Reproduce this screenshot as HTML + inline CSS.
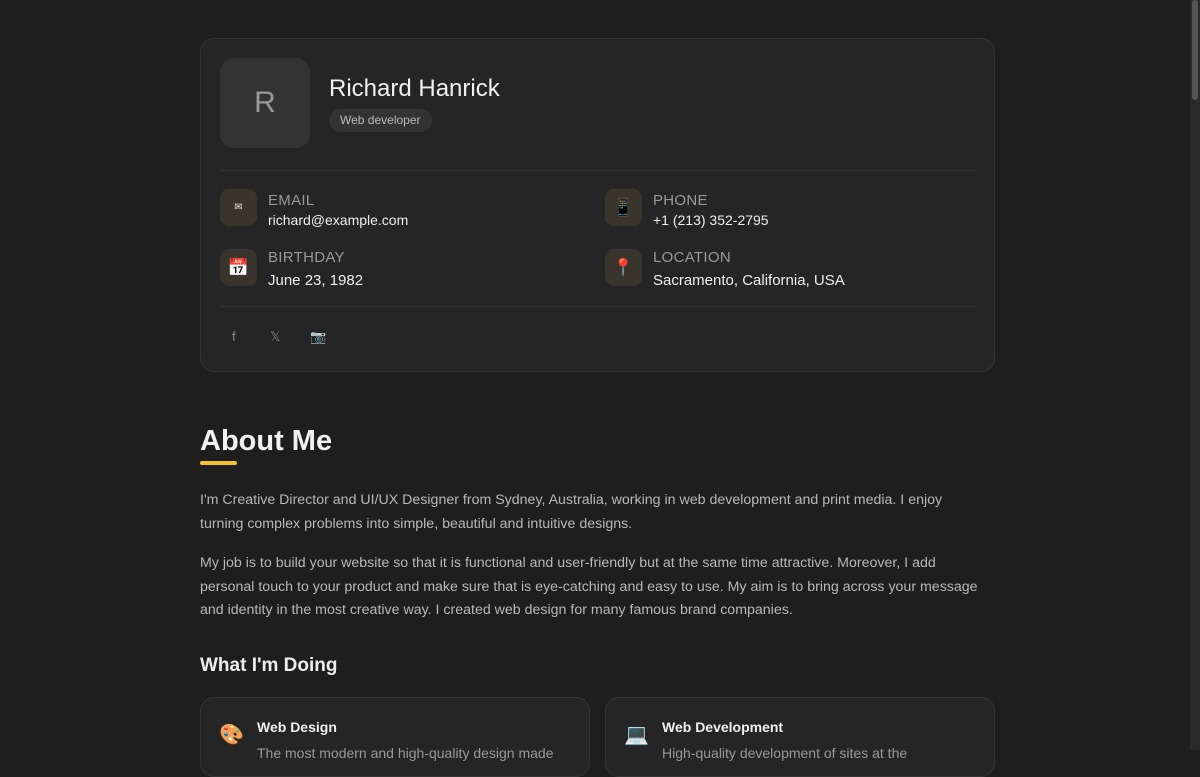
<!DOCTYPE html>
<html><head><meta charset="utf-8"><style>
*{box-sizing:border-box;margin:0;padding:0}
html,body{width:1200px;height:750px;overflow:hidden;background:#1e1e1e;font-family:"Liberation Sans",sans-serif;color:#e8e8e8}
.sb{position:absolute;right:0;top:0;width:10px;height:750px;background:#2a2a2a}
.sb i{position:absolute;left:2px;top:0;width:6px;height:100px;background:#555;border-radius:3px}
.card{position:absolute;left:200px;top:38px;width:795px;height:334px;background:#252525;border:1px solid #353535;border-radius:14px}
.av{position:absolute;left:19px;top:19px;width:90px;height:90px;background:#333;border-radius:14px;color:#999;font-size:30px;text-align:center;line-height:90px}
.name{position:absolute;left:128px;top:36px;font-size:24px;color:#f0f0f0}
.tag{position:absolute;left:128px;top:70px;height:23px;padding:0 11px;background:#333;border-radius:12px;font-size:12px;color:#bbb;line-height:23px}
.hr{position:absolute;left:19px;right:19px;height:1px;background:#333}
.ic{position:absolute;width:37px;height:37px;border-radius:9px;background:#3a352c;text-align:center;line-height:37px;font-size:17px}
.lb{position:absolute;font-size:15px;color:#999;letter-spacing:.3px}
.vl{position:absolute;font-size:14px;color:#eee}
.soc{position:absolute;top:290px;font-size:13px;color:#888}
h2{position:absolute;left:200px;top:425px;font-size:29px;font-weight:600;color:#f2f2f2}
.ul{position:absolute;left:200px;top:461px;width:37px;height:4px;background:#f2c230;border-radius:2px}
p{position:absolute;left:200px;width:820px;font-size:14.2px;line-height:23.5px;color:#b8b8b8;white-space:nowrap}
h3{position:absolute;left:200px;top:655px;font-size:19px;font-weight:600;color:#eee}
.sv{position:absolute;top:697px;width:390px;height:80px;background:#252525;border:1px solid #353535;border-radius:14px}
.sv b{position:absolute;left:56px;top:21px;font-size:14px;color:#f0f0f0}
.sv span{position:absolute;left:18px;top:24px;font-size:20px}
.sv em{position:absolute;left:56px;top:47px;font-style:normal;font-size:14px;color:#999}
</style></head><body>
<div class="card">
<div class="av">R</div>
<div class="name">Richard Hanrick</div>
<div class="tag">Web developer</div>
<div class="hr" style="top:131px"></div>
<div class="ic" style="left:19px;top:150px;font-size:10px">✉</div>
<div class="lb" style="left:67px;top:153px">EMAIL</div>
<div class="vl" style="left:67px;top:173px">richard@example.com</div>
<div class="ic" style="left:404px;top:150px">📱</div>
<div class="lb" style="left:452px;top:153px">PHONE</div>
<div class="vl" style="left:452px;top:173px">+1 (213) 352-2795</div>
<div class="ic" style="left:19px;top:210px">📅</div>
<div class="lb" style="left:67px;top:210px">BIRTHDAY</div>
<div class="vl" style="left:67px;top:233px;font-size:15px">June 23, 1982</div>
<div class="ic" style="left:404px;top:210px">📍</div>
<div class="lb" style="left:452px;top:210px">LOCATION</div>
<div class="vl" style="left:452px;top:233px;font-size:15px">Sacramento, California, USA</div>
<div class="hr" style="top:267px"></div>
<div class="soc" style="left:31px">f</div>
<div class="soc" style="left:69px">𝕏</div>
<div class="soc" style="left:109px">📷</div>
</div>
<h2>About Me</h2><div class="ul"></div>
<p style="top:489px">I'm Creative Director and UI/UX Designer from Sydney, Australia, working in web development and print media. I enjoy<br>turning complex problems into simple, beautiful and intuitive designs.</p>
<p style="top:552px">My job is to build your website so that it is functional and user-friendly but at the same time attractive. Moreover, I add<br>personal touch to your product and make sure that is eye-catching and easy to use. My aim is to bring across your message<br>and identity in the most creative way. I created web design for many famous brand companies.</p>
<h3>What I'm Doing</h3>
<div class="sv" style="left:200px"><span>🎨</span><b>Web Design</b><em>The most modern and high-quality design made</em></div>
<div class="sv" style="left:605px"><span>💻</span><b>Web Development</b><em>High-quality development of sites at the</em></div>
<div class="sb"><i></i></div>
</body></html>
